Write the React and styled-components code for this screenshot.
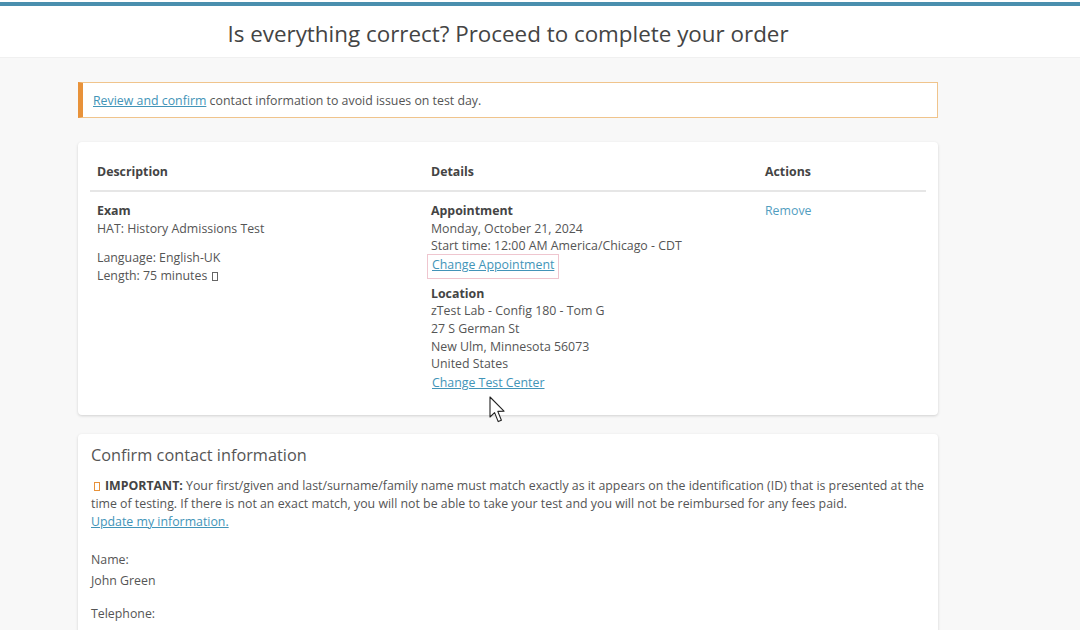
import styled, { createGlobalStyle } from "styled-components";

const GlobalStyle = createGlobalStyle`
  html, body {
    margin: 0;
    padding: 0;
    background: #f8f8f8;
    font-family: "Open Sans", "Liberation Sans", sans-serif;
    color: #555;
    font-size: 12.35px;
  }
  * { box-sizing: border-box; }
`;

export default function App() {
  return (
    <Page>
      <GlobalStyle />
      <TopBar />
      <Header>
        <Container>
          <Title>Is everything correct? Proceed to complete your order</Title>
        </Container>
      </Header>
      <Main>
        <Container>
          <Alert>
            <Link href="#">Review and confirm</Link> contact information to avoid issues on test day.
          </Alert>

          <Card $pad="20px 12px 18px">
            <Table>
              <HeadCell>Description</HeadCell>
              <HeadCell>Details</HeadCell>
              <HeadCell>Actions</HeadCell>

              <Cell>
                <Strong>Exam</Strong>
                <Line>HAT: History Admissions Test</Line>
                <Block>
                  <Line>Language: English-UK</Line>
                  <Line>
                    Length: 75 minutes <Tofu />
                  </Line>
                </Block>
              </Cell>
              <Cell>
                <Strong>Appointment</Strong>
                <Line>Monday, October 21, 2024</Line>
                <Line>Start time: 12:00 AM America/Chicago - CDT</Line>
                <BoxLink href="#" $focused>
                  Change Appointment
                </BoxLink>
                <Block $gap="6px">
                  <Strong>Location</Strong>
                  <Line>zTest Lab - Config 180 - Tom G</Line>
                  <Line>27 S German St</Line>
                  <Line>New Ulm, Minnesota 56073</Line>
                  <Line>United States</Line>
                  <BoxLink href="#">Change Test Center</BoxLink>
                </Block>
              </Cell>
              <Cell>
                <PlainLink href="#">Remove</PlainLink>
              </Cell>
            </Table>
          </Card>

          <Card $pad="9px 12px 0 13px">
            <CardTitle>Confirm contact information</CardTitle>
            <Paragraph>
              <Tofu $orange />
              <b>IMPORTANT:</b> Your first/given and last/surname/family name must match exactly as it
              appears on the identification (ID) that is presented at the time of testing. If there is not
              an exact match, you will not be able to take your test and you will not be reimbursed for any
              fees paid.
              <br />
              <Link href="#">Update my information.</Link>
            </Paragraph>
            <Field>
              <Label>Name:</Label>
              <Value>John Green</Value>
            </Field>
            <Field>
              <Label>Telephone:</Label>
              <Value>+44 1234567890</Value>
            </Field>
          </Card>
        </Container>
      </Main>
      <Cursor viewBox="0 0 18 28" width="18" height="28">
        <path
          d="M1 1 L1 21 L5.6 16.6 L9.2 25.6 L12.4 24.2 L8.8 15.4 L15 15.2 Z"
          fill="#fff"
          stroke="#222"
          strokeWidth="1.1"
          strokeLinejoin="round"
        />
      </Cursor>
    </Page>
  );
}

const Page = styled.div`
  position: relative;
  overflow: hidden;
  height: 630px;
`;

const TopBar = styled.div`
  height: 6px;
  border-top: 2px solid #fff;
  background: #4a8fae;
`;

const Header = styled.header`
  background: #fff;
  height: 52px;
  border-bottom: 1px solid #f0f0f0;
`;

const Container = styled.div`
  width: 860px;
  margin-left: 78px;
`;

const Title = styled.h1`
  margin: 0;
  padding-top: 12px;
  text-align: center;
  font-weight: 400;
  font-size: 22.4px;
  line-height: 32px;
  color: #444;
`;

const Main = styled.main`
  padding-top: 24px;
`;

const Alert = styled.div`
  height: 36px;
  display: flex;
  align-items: center;
  white-space: pre;
  padding-left: 10px;
  background: #fff;
  border: 1px solid #f0c48c;
  border-left: 5px solid #e8923a;
  margin-bottom: 24px;
`;

const Link = styled.a`
  color: #4294b8;
  text-decoration: underline;
`;

const PlainLink = styled.a`
  color: #529dbf;
  text-decoration: none;
`;

const BoxLink = styled.a`
  display: inline-block;
  margin-left: -4px;
  margin-top: -1px;
  padding: 1px 4px 4px;
  line-height: 18px;
  color: #4294b8;
  text-decoration: underline;
  border: 1px solid ${(p) => (p.$focused ? "#efc6cf" : "transparent")};
`;

const Card = styled.section`
  background: #fff;
  border-radius: 4px;
  box-shadow: 0 1px 3px rgba(0, 0, 0, 0.16);
  padding: ${(p) => p.$pad};
  margin-bottom: 19px;
`;

const Table = styled.div`
  display: grid;
  grid-template-columns: 334px 334px 1fr;
`;

const HeadCell = styled.div`
  font-weight: 700;
  color: #444;
  line-height: 18px;
  padding: 1px 7px 9px;
  border-bottom: 2px solid #e6e6e6;
`;

const Cell = styled.div`
  padding: 10px 7px 0;
  line-height: 17.6px;
  display: flex;
  flex-direction: column;
  align-items: flex-start;
`;

const Strong = styled.div`
  font-weight: 700;
  color: #444;
`;

const Line = styled.div``;

const Block = styled.div`
  margin-top: ${(p) => p.$gap || "12px"};
  display: flex;
  flex-direction: column;
  align-items: flex-start;
`;

const Tofu = styled.span`
  display: inline-block;
  width: 6px;
  height: 9px;
  border: 1px solid ${(p) => (p.$orange ? "#e8923a" : "#666")};
  margin: ${(p) => (p.$orange ? "0 5px 0 3px" : "0 0 0 1px")};
  vertical-align: -1px;
`;

const CardTitle = styled.h2`
  margin: 0 0 10px;
  font-size: 16.3px;
  font-weight: 400;
  line-height: 24px;
  color: #555;
`;

const Paragraph = styled.p`
  margin: 0 0 20px;
  line-height: 18px;

  b {
    color: #444;
  }
`;

const Field = styled.div`
  margin-bottom: 15px;
  line-height: 18px;
`;

const Label = styled.div``;

const Value = styled.div`
  margin-top: 3px;
`;

const Cursor = styled.svg`
  position: absolute;
  left: 489px;
  top: 396px;
`;
